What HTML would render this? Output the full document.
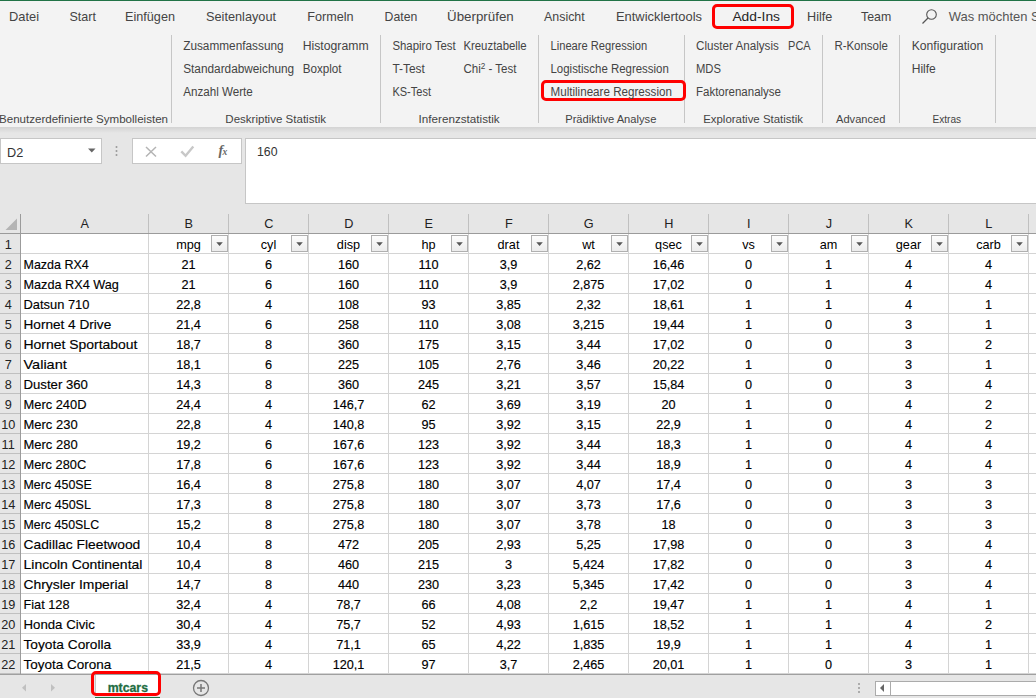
<!DOCTYPE html>
<html><head><meta charset="utf-8"><style>
html,body{margin:0;padding:0;}
body{width:1036px;height:698px;position:relative;overflow:hidden;background:#e6e6e6;font-family:"Liberation Sans", sans-serif;}
div{box-sizing:border-box;}
svg{position:absolute;left:0;top:0;}
svg text{font-family:"Liberation Sans", sans-serif;}
</style></head><body>
<div style="position:absolute;left:0;top:0;width:1036px;height:1px;background:#217346"></div>
<div style="position:absolute;left:0;top:1px;width:1036px;height:126px;background:#f3f3f3"></div>
<div style="position:absolute;left:0;top:127px;width:1036px;height:6px;background:linear-gradient(#d3d3d3,#e6e6e6)"></div>
<div style="position:absolute;left:171px;top:35px;width:1px;height:88px;background:#c6c6c6"></div><div style="position:absolute;left:380px;top:35px;width:1px;height:88px;background:#c6c6c6"></div><div style="position:absolute;left:538px;top:35px;width:1px;height:88px;background:#c6c6c6"></div><div style="position:absolute;left:684px;top:35px;width:1px;height:88px;background:#c6c6c6"></div><div style="position:absolute;left:822px;top:35px;width:1px;height:88px;background:#c6c6c6"></div><div style="position:absolute;left:899px;top:35px;width:1px;height:88px;background:#c6c6c6"></div><div style="position:absolute;left:995px;top:35px;width:1px;height:88px;background:#c6c6c6"></div>
<!-- red highlight boxes -->
<div style="position:absolute;left:712px;top:4px;width:82px;height:25px;border:3px solid #f00;border-radius:5px"></div>
<div style="position:absolute;left:541px;top:80px;width:145px;height:21px;border:3px solid #f00;border-radius:5px"></div>
<!-- formula bar -->
<div style="position:absolute;left:0px;top:138px;width:102px;height:26px;background:#fff;border:1px solid #c6c6c6"></div>
<div style="position:absolute;left:132px;top:138px;width:110px;height:26px;background:#fff;border:1px solid #c6c6c6"></div>
<div style="position:absolute;left:245px;top:138px;width:800px;height:66px;background:#fff;border:1px solid #c6c6c6"></div>
<div style="position:absolute;left:0;top:214px;width:1036px;height:19px;background:#e6e6e6"></div><div style="position:absolute;left:0;top:233px;width:20px;height:441px;background:#e6e6e6"></div><div style="position:absolute;left:21px;top:234px;width:1015px;height:440px;background:#fff"></div><div style="position:absolute;left:148px;top:234px;width:1px;height:440px;background:#d4d4d4"></div><div style="position:absolute;left:148px;top:214px;width:1px;height:19px;background:#c0c0c0"></div><div style="position:absolute;left:228px;top:234px;width:1px;height:440px;background:#d4d4d4"></div><div style="position:absolute;left:228px;top:214px;width:1px;height:19px;background:#c0c0c0"></div><div style="position:absolute;left:308px;top:234px;width:1px;height:440px;background:#d4d4d4"></div><div style="position:absolute;left:308px;top:214px;width:1px;height:19px;background:#c0c0c0"></div><div style="position:absolute;left:388px;top:234px;width:1px;height:440px;background:#d4d4d4"></div><div style="position:absolute;left:388px;top:214px;width:1px;height:19px;background:#c0c0c0"></div><div style="position:absolute;left:468px;top:234px;width:1px;height:440px;background:#d4d4d4"></div><div style="position:absolute;left:468px;top:214px;width:1px;height:19px;background:#c0c0c0"></div><div style="position:absolute;left:548px;top:234px;width:1px;height:440px;background:#d4d4d4"></div><div style="position:absolute;left:548px;top:214px;width:1px;height:19px;background:#c0c0c0"></div><div style="position:absolute;left:628px;top:234px;width:1px;height:440px;background:#d4d4d4"></div><div style="position:absolute;left:628px;top:214px;width:1px;height:19px;background:#c0c0c0"></div><div style="position:absolute;left:708px;top:234px;width:1px;height:440px;background:#d4d4d4"></div><div style="position:absolute;left:708px;top:214px;width:1px;height:19px;background:#c0c0c0"></div><div style="position:absolute;left:788px;top:234px;width:1px;height:440px;background:#d4d4d4"></div><div style="position:absolute;left:788px;top:214px;width:1px;height:19px;background:#c0c0c0"></div><div style="position:absolute;left:868px;top:234px;width:1px;height:440px;background:#d4d4d4"></div><div style="position:absolute;left:868px;top:214px;width:1px;height:19px;background:#c0c0c0"></div><div style="position:absolute;left:948px;top:234px;width:1px;height:440px;background:#d4d4d4"></div><div style="position:absolute;left:948px;top:214px;width:1px;height:19px;background:#c0c0c0"></div><div style="position:absolute;left:1028px;top:234px;width:1px;height:440px;background:#d4d4d4"></div><div style="position:absolute;left:1028px;top:214px;width:1px;height:19px;background:#c0c0c0"></div><div style="position:absolute;left:21px;top:253px;width:1015px;height:1px;background:#d4d4d4"></div><div style="position:absolute;left:0;top:253px;width:20px;height:1px;background:#c0c0c0"></div><div style="position:absolute;left:21px;top:273px;width:1015px;height:1px;background:#d4d4d4"></div><div style="position:absolute;left:0;top:273px;width:20px;height:1px;background:#c0c0c0"></div><div style="position:absolute;left:21px;top:293px;width:1015px;height:1px;background:#d4d4d4"></div><div style="position:absolute;left:0;top:293px;width:20px;height:1px;background:#c0c0c0"></div><div style="position:absolute;left:21px;top:313px;width:1015px;height:1px;background:#d4d4d4"></div><div style="position:absolute;left:0;top:313px;width:20px;height:1px;background:#c0c0c0"></div><div style="position:absolute;left:21px;top:333px;width:1015px;height:1px;background:#d4d4d4"></div><div style="position:absolute;left:0;top:333px;width:20px;height:1px;background:#c0c0c0"></div><div style="position:absolute;left:21px;top:353px;width:1015px;height:1px;background:#d4d4d4"></div><div style="position:absolute;left:0;top:353px;width:20px;height:1px;background:#c0c0c0"></div><div style="position:absolute;left:21px;top:373px;width:1015px;height:1px;background:#d4d4d4"></div><div style="position:absolute;left:0;top:373px;width:20px;height:1px;background:#c0c0c0"></div><div style="position:absolute;left:21px;top:393px;width:1015px;height:1px;background:#d4d4d4"></div><div style="position:absolute;left:0;top:393px;width:20px;height:1px;background:#c0c0c0"></div><div style="position:absolute;left:21px;top:413px;width:1015px;height:1px;background:#d4d4d4"></div><div style="position:absolute;left:0;top:413px;width:20px;height:1px;background:#c0c0c0"></div><div style="position:absolute;left:21px;top:433px;width:1015px;height:1px;background:#d4d4d4"></div><div style="position:absolute;left:0;top:433px;width:20px;height:1px;background:#c0c0c0"></div><div style="position:absolute;left:21px;top:453px;width:1015px;height:1px;background:#d4d4d4"></div><div style="position:absolute;left:0;top:453px;width:20px;height:1px;background:#c0c0c0"></div><div style="position:absolute;left:21px;top:473px;width:1015px;height:1px;background:#d4d4d4"></div><div style="position:absolute;left:0;top:473px;width:20px;height:1px;background:#c0c0c0"></div><div style="position:absolute;left:21px;top:493px;width:1015px;height:1px;background:#d4d4d4"></div><div style="position:absolute;left:0;top:493px;width:20px;height:1px;background:#c0c0c0"></div><div style="position:absolute;left:21px;top:513px;width:1015px;height:1px;background:#d4d4d4"></div><div style="position:absolute;left:0;top:513px;width:20px;height:1px;background:#c0c0c0"></div><div style="position:absolute;left:21px;top:533px;width:1015px;height:1px;background:#d4d4d4"></div><div style="position:absolute;left:0;top:533px;width:20px;height:1px;background:#c0c0c0"></div><div style="position:absolute;left:21px;top:553px;width:1015px;height:1px;background:#d4d4d4"></div><div style="position:absolute;left:0;top:553px;width:20px;height:1px;background:#c0c0c0"></div><div style="position:absolute;left:21px;top:573px;width:1015px;height:1px;background:#d4d4d4"></div><div style="position:absolute;left:0;top:573px;width:20px;height:1px;background:#c0c0c0"></div><div style="position:absolute;left:21px;top:593px;width:1015px;height:1px;background:#d4d4d4"></div><div style="position:absolute;left:0;top:593px;width:20px;height:1px;background:#c0c0c0"></div><div style="position:absolute;left:21px;top:613px;width:1015px;height:1px;background:#d4d4d4"></div><div style="position:absolute;left:0;top:613px;width:20px;height:1px;background:#c0c0c0"></div><div style="position:absolute;left:21px;top:633px;width:1015px;height:1px;background:#d4d4d4"></div><div style="position:absolute;left:0;top:633px;width:20px;height:1px;background:#c0c0c0"></div><div style="position:absolute;left:21px;top:653px;width:1015px;height:1px;background:#d4d4d4"></div><div style="position:absolute;left:0;top:653px;width:20px;height:1px;background:#c0c0c0"></div><div style="position:absolute;left:21px;top:673px;width:1015px;height:1px;background:#d4d4d4"></div><div style="position:absolute;left:0;top:673px;width:20px;height:1px;background:#c0c0c0"></div><div style="position:absolute;left:0;top:233px;width:1036px;height:1px;background:#9b9b9b"></div><div style="position:absolute;left:20px;top:214px;width:1px;height:460px;background:#9b9b9b"></div><div style="position:absolute;left:211px;top:235px;width:17px;height:17px;border:1px solid #b0b0b0;background:linear-gradient(#fdfdfd,#ececec)"></div><div style="position:absolute;left:291px;top:235px;width:17px;height:17px;border:1px solid #b0b0b0;background:linear-gradient(#fdfdfd,#ececec)"></div><div style="position:absolute;left:371px;top:235px;width:17px;height:17px;border:1px solid #b0b0b0;background:linear-gradient(#fdfdfd,#ececec)"></div><div style="position:absolute;left:451px;top:235px;width:17px;height:17px;border:1px solid #b0b0b0;background:linear-gradient(#fdfdfd,#ececec)"></div><div style="position:absolute;left:531px;top:235px;width:17px;height:17px;border:1px solid #b0b0b0;background:linear-gradient(#fdfdfd,#ececec)"></div><div style="position:absolute;left:611px;top:235px;width:17px;height:17px;border:1px solid #b0b0b0;background:linear-gradient(#fdfdfd,#ececec)"></div><div style="position:absolute;left:691px;top:235px;width:17px;height:17px;border:1px solid #b0b0b0;background:linear-gradient(#fdfdfd,#ececec)"></div><div style="position:absolute;left:771px;top:235px;width:17px;height:17px;border:1px solid #b0b0b0;background:linear-gradient(#fdfdfd,#ececec)"></div><div style="position:absolute;left:851px;top:235px;width:17px;height:17px;border:1px solid #b0b0b0;background:linear-gradient(#fdfdfd,#ececec)"></div><div style="position:absolute;left:931px;top:235px;width:17px;height:17px;border:1px solid #b0b0b0;background:linear-gradient(#fdfdfd,#ececec)"></div><div style="position:absolute;left:1011px;top:235px;width:17px;height:17px;border:1px solid #b0b0b0;background:linear-gradient(#fdfdfd,#ececec)"></div>
<!-- sheet tab bar -->
<div style="position:absolute;left:0;top:675px;width:1036px;height:23px;background:#e6e6e6"></div>
<div style="position:absolute;left:0;top:674px;width:1036px;height:1px;background:#a0a0a0"></div>
<div style="position:absolute;left:95px;top:675px;width:65px;height:21px;background:#fff;border-left:1px solid #c6c6c6"></div>
<div style="position:absolute;left:95px;top:696.5px;width:65px;height:1.5px;background:#217346"></div>
<div style="position:absolute;left:91px;top:671px;width:70px;height:25px;border:3px solid #f00;border-radius:5px"></div>
<div style="position:absolute;left:875px;top:681px;width:170px;height:15px;background:#fff;border:1px solid #ababab"></div>
<div style="position:absolute;left:890px;top:681px;width:1px;height:15px;background:#ababab"></div>
<svg width="1036" height="698" viewBox="0 0 1036 698">
<text x="9.0" y="21.0" font-size="12.8" fill="#444" font-weight="normal" textLength="30.0" lengthAdjust="spacingAndGlyphs" >Datei</text><text x="69.5" y="21.0" font-size="12.8" fill="#444" font-weight="normal" textLength="26.5" lengthAdjust="spacingAndGlyphs" >Start</text><text x="125.0" y="21.0" font-size="12.8" fill="#444" font-weight="normal" textLength="50.0" lengthAdjust="spacingAndGlyphs" >Einfügen</text><text x="206.0" y="21.0" font-size="12.8" fill="#444" font-weight="normal" textLength="70.0" lengthAdjust="spacingAndGlyphs" >Seitenlayout</text><text x="307.2" y="21.0" font-size="12.8" fill="#444" font-weight="normal" textLength="46.4" lengthAdjust="spacingAndGlyphs" >Formeln</text><text x="384.6" y="21.0" font-size="12.8" fill="#444" font-weight="normal" textLength="32.7" lengthAdjust="spacingAndGlyphs" >Daten</text><text x="447.1" y="21.0" font-size="12.8" fill="#444" font-weight="normal" textLength="66.6" lengthAdjust="spacingAndGlyphs" >Überprüfen</text><text x="544.1" y="21.0" font-size="12.8" fill="#444" font-weight="normal" textLength="40.6" lengthAdjust="spacingAndGlyphs" >Ansicht</text><text x="616.0" y="21.0" font-size="12.8" fill="#444" font-weight="normal" textLength="86.0" lengthAdjust="spacingAndGlyphs" >Entwicklertools</text><text x="732.4" y="21.0" font-size="12.8" fill="#262626" font-weight="normal" textLength="47.6" lengthAdjust="spacingAndGlyphs" >Add-Ins</text><text x="807.0" y="21.0" font-size="12.8" fill="#444" font-weight="normal" textLength="25.3" lengthAdjust="spacingAndGlyphs" >Hilfe</text><text x="861.0" y="21.0" font-size="12.8" fill="#444" font-weight="normal" textLength="30.2" lengthAdjust="spacingAndGlyphs" >Team</text><text x="948.7" y="21" font-size="12.8" fill="#555" textLength="91" lengthAdjust="spacingAndGlyphs">Was möchten S</text><text x="183.2" y="50.0" font-size="12" fill="#444" font-weight="normal" textLength="100.4" lengthAdjust="spacingAndGlyphs" >Zusammenfassung</text><text x="302.7" y="50.0" font-size="12" fill="#444" font-weight="normal" textLength="65.9" lengthAdjust="spacingAndGlyphs" >Histogramm</text><text x="183.2" y="73.0" font-size="12" fill="#444" font-weight="normal" textLength="111.0" lengthAdjust="spacingAndGlyphs" >Standardabweichung</text><text x="302.7" y="73.0" font-size="12" fill="#444" font-weight="normal" textLength="38.9" lengthAdjust="spacingAndGlyphs" >Boxplot</text><text x="183.2" y="96.0" font-size="12" fill="#444" font-weight="normal" textLength="69.6" lengthAdjust="spacingAndGlyphs" >Anzahl Werte</text><text x="392.4" y="50.0" font-size="12" fill="#444" font-weight="normal" textLength="63.3" lengthAdjust="spacingAndGlyphs" >Shapiro Test</text><text x="463.4" y="50.0" font-size="12" fill="#444" font-weight="normal" textLength="63.3" lengthAdjust="spacingAndGlyphs" >Kreuztabelle</text><text x="392.4" y="73.0" font-size="12" fill="#444" font-weight="normal" textLength="32.4" lengthAdjust="spacingAndGlyphs" >T-Test</text><text x="463.4" y="73" font-size="12" fill="#444" textLength="53.10000000000002" lengthAdjust="spacingAndGlyphs">Chi<tspan font-size="8.5" dy="-4.2">2</tspan><tspan dy="4.2"> - Test</tspan></text><text x="392.4" y="96.0" font-size="12" fill="#444" font-weight="normal" textLength="38.6" lengthAdjust="spacingAndGlyphs" >KS-Test</text><text x="550.5" y="50.0" font-size="12" fill="#444" font-weight="normal" textLength="96.7" lengthAdjust="spacingAndGlyphs" >Lineare Regression</text><text x="550.5" y="73.0" font-size="12" fill="#444" font-weight="normal" textLength="118.3" lengthAdjust="spacingAndGlyphs" >Logistische Regression</text><text x="550.5" y="96.0" font-size="12" fill="#444" font-weight="normal" textLength="121.4" lengthAdjust="spacingAndGlyphs" >Multilineare Regression</text><text x="696.0" y="50.0" font-size="12" fill="#444" font-weight="normal" textLength="82.8" lengthAdjust="spacingAndGlyphs" >Cluster Analysis</text><text x="788.1" y="50.0" font-size="12" fill="#444" font-weight="normal" textLength="22.6" lengthAdjust="spacingAndGlyphs" >PCA</text><text x="696.0" y="73.0" font-size="12" fill="#444" font-weight="normal" textLength="25.0" lengthAdjust="spacingAndGlyphs" >MDS</text><text x="696.0" y="96.0" font-size="12" fill="#444" font-weight="normal" textLength="85.0" lengthAdjust="spacingAndGlyphs" >Faktorenanalyse</text><text x="834.4" y="50.0" font-size="12" fill="#444" font-weight="normal" textLength="53.5" lengthAdjust="spacingAndGlyphs" >R-Konsole</text><text x="911.7" y="50.0" font-size="12" fill="#444" font-weight="normal" textLength="71.6" lengthAdjust="spacingAndGlyphs" >Konfiguration</text><text x="911.7" y="73.0" font-size="12" fill="#444" font-weight="normal" textLength="24.1" lengthAdjust="spacingAndGlyphs" >Hilfe</text><text x="-1.0" y="123.0" font-size="11.6" fill="#444" font-weight="normal" textLength="169.0" lengthAdjust="spacingAndGlyphs" >Benutzerdefinierte Symbolleisten</text><text x="225.3" y="123.0" font-size="11.6" fill="#444" font-weight="normal" textLength="100.7" lengthAdjust="spacingAndGlyphs" >Deskriptive Statistik</text><text x="418.6" y="123.0" font-size="11.6" fill="#444" font-weight="normal" textLength="81.1" lengthAdjust="spacingAndGlyphs" >Inferenzstatistik</text><text x="565.2" y="123.0" font-size="11.6" fill="#444" font-weight="normal" textLength="91.2" lengthAdjust="spacingAndGlyphs" >Prädiktive Analyse</text><text x="703.2" y="123.0" font-size="11.6" fill="#444" font-weight="normal" textLength="99.7" lengthAdjust="spacingAndGlyphs" >Explorative Statistik</text><text x="836.0" y="123.0" font-size="11.6" fill="#444" font-weight="normal" textLength="49.4" lengthAdjust="spacingAndGlyphs" >Advanced</text><text x="932.4" y="123.0" font-size="11.6" fill="#444" font-weight="normal" textLength="28.7" lengthAdjust="spacingAndGlyphs" >Extras</text><polygon points="5.5,230 17,230 17,218.5" fill="#b4b4b4"/><text x="84.8" y="227.8" font-size="12.7" fill="#222" text-anchor="middle">A</text><text x="188.8" y="227.8" font-size="12.7" fill="#222" text-anchor="middle">B</text><text x="268.8" y="227.8" font-size="12.7" fill="#222" text-anchor="middle">C</text><text x="348.8" y="227.8" font-size="12.7" fill="#222" text-anchor="middle">D</text><text x="428.8" y="227.8" font-size="12.7" fill="#222" text-anchor="middle">E</text><text x="508.8" y="227.8" font-size="12.7" fill="#222" text-anchor="middle">F</text><text x="588.8" y="227.8" font-size="12.7" fill="#222" text-anchor="middle">G</text><text x="668.8" y="227.8" font-size="12.7" fill="#222" text-anchor="middle">H</text><text x="748.8" y="227.8" font-size="12.7" fill="#222" text-anchor="middle">I</text><text x="828.8" y="227.8" font-size="12.7" fill="#222" text-anchor="middle">J</text><text x="908.8" y="227.8" font-size="12.7" fill="#222" text-anchor="middle">K</text><text x="988.8" y="227.8" font-size="12.7" fill="#222" text-anchor="middle">L</text><text x="8.2" y="249" font-size="12.7" fill="#222" text-anchor="middle">1</text><text x="8.2" y="269" font-size="12.7" fill="#222" text-anchor="middle">2</text><text x="8.2" y="289" font-size="12.7" fill="#222" text-anchor="middle">3</text><text x="8.2" y="309" font-size="12.7" fill="#222" text-anchor="middle">4</text><text x="8.2" y="329" font-size="12.7" fill="#222" text-anchor="middle">5</text><text x="8.2" y="349" font-size="12.7" fill="#222" text-anchor="middle">6</text><text x="8.2" y="369" font-size="12.7" fill="#222" text-anchor="middle">7</text><text x="8.2" y="389" font-size="12.7" fill="#222" text-anchor="middle">8</text><text x="8.2" y="409" font-size="12.7" fill="#222" text-anchor="middle">9</text><text x="8.2" y="429" font-size="12.7" fill="#222" text-anchor="middle">10</text><text x="8.2" y="449" font-size="12.7" fill="#222" text-anchor="middle">11</text><text x="8.2" y="469" font-size="12.7" fill="#222" text-anchor="middle">12</text><text x="8.2" y="489" font-size="12.7" fill="#222" text-anchor="middle">13</text><text x="8.2" y="509" font-size="12.7" fill="#222" text-anchor="middle">14</text><text x="8.2" y="529" font-size="12.7" fill="#222" text-anchor="middle">15</text><text x="8.2" y="549" font-size="12.7" fill="#222" text-anchor="middle">16</text><text x="8.2" y="569" font-size="12.7" fill="#222" text-anchor="middle">17</text><text x="8.2" y="589" font-size="12.7" fill="#222" text-anchor="middle">18</text><text x="8.2" y="609" font-size="12.7" fill="#222" text-anchor="middle">19</text><text x="8.2" y="629" font-size="12.7" fill="#222" text-anchor="middle">20</text><text x="8.2" y="649" font-size="12.7" fill="#222" text-anchor="middle">21</text><text x="8.2" y="669" font-size="12.7" fill="#222" text-anchor="middle">22</text><text x="188.5" y="249" font-size="12.7" fill="#000" text-anchor="middle">mpg</text><polygon points="216.3,242.3 222.8,242.3 219.55,246" fill="#555"/><text x="268.5" y="249" font-size="12.7" fill="#000" text-anchor="middle">cyl</text><polygon points="296.3,242.3 302.8,242.3 299.55,246" fill="#555"/><text x="348.5" y="249" font-size="12.7" fill="#000" text-anchor="middle">disp</text><polygon points="376.3,242.3 382.8,242.3 379.55,246" fill="#555"/><text x="428.5" y="249" font-size="12.7" fill="#000" text-anchor="middle">hp</text><polygon points="456.3,242.3 462.8,242.3 459.55,246" fill="#555"/><text x="508.5" y="249" font-size="12.7" fill="#000" text-anchor="middle">drat</text><polygon points="536.3,242.3 542.8,242.3 539.55,246" fill="#555"/><text x="588.5" y="249" font-size="12.7" fill="#000" text-anchor="middle">wt</text><polygon points="616.3,242.3 622.8,242.3 619.55,246" fill="#555"/><text x="668.5" y="249" font-size="12.7" fill="#000" text-anchor="middle">qsec</text><polygon points="696.3,242.3 702.8,242.3 699.55,246" fill="#555"/><text x="748.5" y="249" font-size="12.7" fill="#000" text-anchor="middle">vs</text><polygon points="776.3,242.3 782.8,242.3 779.55,246" fill="#555"/><text x="828.5" y="249" font-size="12.7" fill="#000" text-anchor="middle">am</text><polygon points="856.3,242.3 862.8,242.3 859.55,246" fill="#555"/><text x="908.5" y="249" font-size="12.7" fill="#000" text-anchor="middle">gear</text><polygon points="936.3,242.3 942.8,242.3 939.55,246" fill="#555"/><text x="988.5" y="249" font-size="12.7" fill="#000" text-anchor="middle">carb</text><polygon points="1016.3,242.3 1022.8,242.3 1019.55,246" fill="#555"/><text x="23.5" y="269" font-size="12.7" fill="#000" stroke="#000" stroke-width="0.15" textLength="65.2" lengthAdjust="spacingAndGlyphs">Mazda RX4</text><text x="188.5" y="269" font-size="12.7" fill="#000" text-anchor="middle" stroke="#000" stroke-width="0.15">21</text><text x="268.5" y="269" font-size="12.7" fill="#000" text-anchor="middle" stroke="#000" stroke-width="0.15">6</text><text x="348.5" y="269" font-size="12.7" fill="#000" text-anchor="middle" stroke="#000" stroke-width="0.15">160</text><text x="428.5" y="269" font-size="12.7" fill="#000" text-anchor="middle" stroke="#000" stroke-width="0.15">110</text><text x="508.5" y="269" font-size="12.7" fill="#000" text-anchor="middle" stroke="#000" stroke-width="0.15">3,9</text><text x="588.5" y="269" font-size="12.7" fill="#000" text-anchor="middle" stroke="#000" stroke-width="0.15">2,62</text><text x="668.5" y="269" font-size="12.7" fill="#000" text-anchor="middle" stroke="#000" stroke-width="0.15">16,46</text><text x="748.5" y="269" font-size="12.7" fill="#000" text-anchor="middle" stroke="#000" stroke-width="0.15">0</text><text x="828.5" y="269" font-size="12.7" fill="#000" text-anchor="middle" stroke="#000" stroke-width="0.15">1</text><text x="908.5" y="269" font-size="12.7" fill="#000" text-anchor="middle" stroke="#000" stroke-width="0.15">4</text><text x="988.5" y="269" font-size="12.7" fill="#000" text-anchor="middle" stroke="#000" stroke-width="0.15">4</text><text x="23.5" y="289" font-size="12.7" fill="#000" stroke="#000" stroke-width="0.15" textLength="95.3" lengthAdjust="spacingAndGlyphs">Mazda RX4 Wag</text><text x="188.5" y="289" font-size="12.7" fill="#000" text-anchor="middle" stroke="#000" stroke-width="0.15">21</text><text x="268.5" y="289" font-size="12.7" fill="#000" text-anchor="middle" stroke="#000" stroke-width="0.15">6</text><text x="348.5" y="289" font-size="12.7" fill="#000" text-anchor="middle" stroke="#000" stroke-width="0.15">160</text><text x="428.5" y="289" font-size="12.7" fill="#000" text-anchor="middle" stroke="#000" stroke-width="0.15">110</text><text x="508.5" y="289" font-size="12.7" fill="#000" text-anchor="middle" stroke="#000" stroke-width="0.15">3,9</text><text x="588.5" y="289" font-size="12.7" fill="#000" text-anchor="middle" stroke="#000" stroke-width="0.15">2,875</text><text x="668.5" y="289" font-size="12.7" fill="#000" text-anchor="middle" stroke="#000" stroke-width="0.15">17,02</text><text x="748.5" y="289" font-size="12.7" fill="#000" text-anchor="middle" stroke="#000" stroke-width="0.15">0</text><text x="828.5" y="289" font-size="12.7" fill="#000" text-anchor="middle" stroke="#000" stroke-width="0.15">1</text><text x="908.5" y="289" font-size="12.7" fill="#000" text-anchor="middle" stroke="#000" stroke-width="0.15">4</text><text x="988.5" y="289" font-size="12.7" fill="#000" text-anchor="middle" stroke="#000" stroke-width="0.15">4</text><text x="23.5" y="309" font-size="12.7" fill="#000" stroke="#000" stroke-width="0.15" textLength="65.9" lengthAdjust="spacingAndGlyphs">Datsun 710</text><text x="188.5" y="309" font-size="12.7" fill="#000" text-anchor="middle" stroke="#000" stroke-width="0.15">22,8</text><text x="268.5" y="309" font-size="12.7" fill="#000" text-anchor="middle" stroke="#000" stroke-width="0.15">4</text><text x="348.5" y="309" font-size="12.7" fill="#000" text-anchor="middle" stroke="#000" stroke-width="0.15">108</text><text x="428.5" y="309" font-size="12.7" fill="#000" text-anchor="middle" stroke="#000" stroke-width="0.15">93</text><text x="508.5" y="309" font-size="12.7" fill="#000" text-anchor="middle" stroke="#000" stroke-width="0.15">3,85</text><text x="588.5" y="309" font-size="12.7" fill="#000" text-anchor="middle" stroke="#000" stroke-width="0.15">2,32</text><text x="668.5" y="309" font-size="12.7" fill="#000" text-anchor="middle" stroke="#000" stroke-width="0.15">18,61</text><text x="748.5" y="309" font-size="12.7" fill="#000" text-anchor="middle" stroke="#000" stroke-width="0.15">1</text><text x="828.5" y="309" font-size="12.7" fill="#000" text-anchor="middle" stroke="#000" stroke-width="0.15">1</text><text x="908.5" y="309" font-size="12.7" fill="#000" text-anchor="middle" stroke="#000" stroke-width="0.15">4</text><text x="988.5" y="309" font-size="12.7" fill="#000" text-anchor="middle" stroke="#000" stroke-width="0.15">1</text><text x="23.5" y="329" font-size="12.7" fill="#000" stroke="#000" stroke-width="0.15" textLength="87.7" lengthAdjust="spacingAndGlyphs">Hornet 4 Drive</text><text x="188.5" y="329" font-size="12.7" fill="#000" text-anchor="middle" stroke="#000" stroke-width="0.15">21,4</text><text x="268.5" y="329" font-size="12.7" fill="#000" text-anchor="middle" stroke="#000" stroke-width="0.15">6</text><text x="348.5" y="329" font-size="12.7" fill="#000" text-anchor="middle" stroke="#000" stroke-width="0.15">258</text><text x="428.5" y="329" font-size="12.7" fill="#000" text-anchor="middle" stroke="#000" stroke-width="0.15">110</text><text x="508.5" y="329" font-size="12.7" fill="#000" text-anchor="middle" stroke="#000" stroke-width="0.15">3,08</text><text x="588.5" y="329" font-size="12.7" fill="#000" text-anchor="middle" stroke="#000" stroke-width="0.15">3,215</text><text x="668.5" y="329" font-size="12.7" fill="#000" text-anchor="middle" stroke="#000" stroke-width="0.15">19,44</text><text x="748.5" y="329" font-size="12.7" fill="#000" text-anchor="middle" stroke="#000" stroke-width="0.15">1</text><text x="828.5" y="329" font-size="12.7" fill="#000" text-anchor="middle" stroke="#000" stroke-width="0.15">0</text><text x="908.5" y="329" font-size="12.7" fill="#000" text-anchor="middle" stroke="#000" stroke-width="0.15">3</text><text x="988.5" y="329" font-size="12.7" fill="#000" text-anchor="middle" stroke="#000" stroke-width="0.15">1</text><text x="23.5" y="349" font-size="12.7" fill="#000" stroke="#000" stroke-width="0.15" textLength="114" lengthAdjust="spacingAndGlyphs">Hornet Sportabout</text><text x="188.5" y="349" font-size="12.7" fill="#000" text-anchor="middle" stroke="#000" stroke-width="0.15">18,7</text><text x="268.5" y="349" font-size="12.7" fill="#000" text-anchor="middle" stroke="#000" stroke-width="0.15">8</text><text x="348.5" y="349" font-size="12.7" fill="#000" text-anchor="middle" stroke="#000" stroke-width="0.15">360</text><text x="428.5" y="349" font-size="12.7" fill="#000" text-anchor="middle" stroke="#000" stroke-width="0.15">175</text><text x="508.5" y="349" font-size="12.7" fill="#000" text-anchor="middle" stroke="#000" stroke-width="0.15">3,15</text><text x="588.5" y="349" font-size="12.7" fill="#000" text-anchor="middle" stroke="#000" stroke-width="0.15">3,44</text><text x="668.5" y="349" font-size="12.7" fill="#000" text-anchor="middle" stroke="#000" stroke-width="0.15">17,02</text><text x="748.5" y="349" font-size="12.7" fill="#000" text-anchor="middle" stroke="#000" stroke-width="0.15">0</text><text x="828.5" y="349" font-size="12.7" fill="#000" text-anchor="middle" stroke="#000" stroke-width="0.15">0</text><text x="908.5" y="349" font-size="12.7" fill="#000" text-anchor="middle" stroke="#000" stroke-width="0.15">3</text><text x="988.5" y="349" font-size="12.7" fill="#000" text-anchor="middle" stroke="#000" stroke-width="0.15">2</text><text x="23.5" y="369" font-size="12.7" fill="#000" stroke="#000" stroke-width="0.15" textLength="43.3" lengthAdjust="spacingAndGlyphs">Valiant</text><text x="188.5" y="369" font-size="12.7" fill="#000" text-anchor="middle" stroke="#000" stroke-width="0.15">18,1</text><text x="268.5" y="369" font-size="12.7" fill="#000" text-anchor="middle" stroke="#000" stroke-width="0.15">6</text><text x="348.5" y="369" font-size="12.7" fill="#000" text-anchor="middle" stroke="#000" stroke-width="0.15">225</text><text x="428.5" y="369" font-size="12.7" fill="#000" text-anchor="middle" stroke="#000" stroke-width="0.15">105</text><text x="508.5" y="369" font-size="12.7" fill="#000" text-anchor="middle" stroke="#000" stroke-width="0.15">2,76</text><text x="588.5" y="369" font-size="12.7" fill="#000" text-anchor="middle" stroke="#000" stroke-width="0.15">3,46</text><text x="668.5" y="369" font-size="12.7" fill="#000" text-anchor="middle" stroke="#000" stroke-width="0.15">20,22</text><text x="748.5" y="369" font-size="12.7" fill="#000" text-anchor="middle" stroke="#000" stroke-width="0.15">1</text><text x="828.5" y="369" font-size="12.7" fill="#000" text-anchor="middle" stroke="#000" stroke-width="0.15">0</text><text x="908.5" y="369" font-size="12.7" fill="#000" text-anchor="middle" stroke="#000" stroke-width="0.15">3</text><text x="988.5" y="369" font-size="12.7" fill="#000" text-anchor="middle" stroke="#000" stroke-width="0.15">1</text><text x="23.5" y="389" font-size="12.7" fill="#000" stroke="#000" stroke-width="0.15" textLength="64.4" lengthAdjust="spacingAndGlyphs">Duster 360</text><text x="188.5" y="389" font-size="12.7" fill="#000" text-anchor="middle" stroke="#000" stroke-width="0.15">14,3</text><text x="268.5" y="389" font-size="12.7" fill="#000" text-anchor="middle" stroke="#000" stroke-width="0.15">8</text><text x="348.5" y="389" font-size="12.7" fill="#000" text-anchor="middle" stroke="#000" stroke-width="0.15">360</text><text x="428.5" y="389" font-size="12.7" fill="#000" text-anchor="middle" stroke="#000" stroke-width="0.15">245</text><text x="508.5" y="389" font-size="12.7" fill="#000" text-anchor="middle" stroke="#000" stroke-width="0.15">3,21</text><text x="588.5" y="389" font-size="12.7" fill="#000" text-anchor="middle" stroke="#000" stroke-width="0.15">3,57</text><text x="668.5" y="389" font-size="12.7" fill="#000" text-anchor="middle" stroke="#000" stroke-width="0.15">15,84</text><text x="748.5" y="389" font-size="12.7" fill="#000" text-anchor="middle" stroke="#000" stroke-width="0.15">0</text><text x="828.5" y="389" font-size="12.7" fill="#000" text-anchor="middle" stroke="#000" stroke-width="0.15">0</text><text x="908.5" y="389" font-size="12.7" fill="#000" text-anchor="middle" stroke="#000" stroke-width="0.15">3</text><text x="988.5" y="389" font-size="12.7" fill="#000" text-anchor="middle" stroke="#000" stroke-width="0.15">4</text><text x="23.5" y="409" font-size="12.7" fill="#000" stroke="#000" stroke-width="0.15" textLength="63" lengthAdjust="spacingAndGlyphs">Merc 240D</text><text x="188.5" y="409" font-size="12.7" fill="#000" text-anchor="middle" stroke="#000" stroke-width="0.15">24,4</text><text x="268.5" y="409" font-size="12.7" fill="#000" text-anchor="middle" stroke="#000" stroke-width="0.15">4</text><text x="348.5" y="409" font-size="12.7" fill="#000" text-anchor="middle" stroke="#000" stroke-width="0.15">146,7</text><text x="428.5" y="409" font-size="12.7" fill="#000" text-anchor="middle" stroke="#000" stroke-width="0.15">62</text><text x="508.5" y="409" font-size="12.7" fill="#000" text-anchor="middle" stroke="#000" stroke-width="0.15">3,69</text><text x="588.5" y="409" font-size="12.7" fill="#000" text-anchor="middle" stroke="#000" stroke-width="0.15">3,19</text><text x="668.5" y="409" font-size="12.7" fill="#000" text-anchor="middle" stroke="#000" stroke-width="0.15">20</text><text x="748.5" y="409" font-size="12.7" fill="#000" text-anchor="middle" stroke="#000" stroke-width="0.15">1</text><text x="828.5" y="409" font-size="12.7" fill="#000" text-anchor="middle" stroke="#000" stroke-width="0.15">0</text><text x="908.5" y="409" font-size="12.7" fill="#000" text-anchor="middle" stroke="#000" stroke-width="0.15">4</text><text x="988.5" y="409" font-size="12.7" fill="#000" text-anchor="middle" stroke="#000" stroke-width="0.15">2</text><text x="23.5" y="429" font-size="12.7" fill="#000" stroke="#000" stroke-width="0.15" textLength="54.1" lengthAdjust="spacingAndGlyphs">Merc 230</text><text x="188.5" y="429" font-size="12.7" fill="#000" text-anchor="middle" stroke="#000" stroke-width="0.15">22,8</text><text x="268.5" y="429" font-size="12.7" fill="#000" text-anchor="middle" stroke="#000" stroke-width="0.15">4</text><text x="348.5" y="429" font-size="12.7" fill="#000" text-anchor="middle" stroke="#000" stroke-width="0.15">140,8</text><text x="428.5" y="429" font-size="12.7" fill="#000" text-anchor="middle" stroke="#000" stroke-width="0.15">95</text><text x="508.5" y="429" font-size="12.7" fill="#000" text-anchor="middle" stroke="#000" stroke-width="0.15">3,92</text><text x="588.5" y="429" font-size="12.7" fill="#000" text-anchor="middle" stroke="#000" stroke-width="0.15">3,15</text><text x="668.5" y="429" font-size="12.7" fill="#000" text-anchor="middle" stroke="#000" stroke-width="0.15">22,9</text><text x="748.5" y="429" font-size="12.7" fill="#000" text-anchor="middle" stroke="#000" stroke-width="0.15">1</text><text x="828.5" y="429" font-size="12.7" fill="#000" text-anchor="middle" stroke="#000" stroke-width="0.15">0</text><text x="908.5" y="429" font-size="12.7" fill="#000" text-anchor="middle" stroke="#000" stroke-width="0.15">4</text><text x="988.5" y="429" font-size="12.7" fill="#000" text-anchor="middle" stroke="#000" stroke-width="0.15">2</text><text x="23.5" y="449" font-size="12.7" fill="#000" stroke="#000" stroke-width="0.15" textLength="54.1" lengthAdjust="spacingAndGlyphs">Merc 280</text><text x="188.5" y="449" font-size="12.7" fill="#000" text-anchor="middle" stroke="#000" stroke-width="0.15">19,2</text><text x="268.5" y="449" font-size="12.7" fill="#000" text-anchor="middle" stroke="#000" stroke-width="0.15">6</text><text x="348.5" y="449" font-size="12.7" fill="#000" text-anchor="middle" stroke="#000" stroke-width="0.15">167,6</text><text x="428.5" y="449" font-size="12.7" fill="#000" text-anchor="middle" stroke="#000" stroke-width="0.15">123</text><text x="508.5" y="449" font-size="12.7" fill="#000" text-anchor="middle" stroke="#000" stroke-width="0.15">3,92</text><text x="588.5" y="449" font-size="12.7" fill="#000" text-anchor="middle" stroke="#000" stroke-width="0.15">3,44</text><text x="668.5" y="449" font-size="12.7" fill="#000" text-anchor="middle" stroke="#000" stroke-width="0.15">18,3</text><text x="748.5" y="449" font-size="12.7" fill="#000" text-anchor="middle" stroke="#000" stroke-width="0.15">1</text><text x="828.5" y="449" font-size="12.7" fill="#000" text-anchor="middle" stroke="#000" stroke-width="0.15">0</text><text x="908.5" y="449" font-size="12.7" fill="#000" text-anchor="middle" stroke="#000" stroke-width="0.15">4</text><text x="988.5" y="449" font-size="12.7" fill="#000" text-anchor="middle" stroke="#000" stroke-width="0.15">4</text><text x="23.5" y="469" font-size="12.7" fill="#000" stroke="#000" stroke-width="0.15" textLength="62.7" lengthAdjust="spacingAndGlyphs">Merc 280C</text><text x="188.5" y="469" font-size="12.7" fill="#000" text-anchor="middle" stroke="#000" stroke-width="0.15">17,8</text><text x="268.5" y="469" font-size="12.7" fill="#000" text-anchor="middle" stroke="#000" stroke-width="0.15">6</text><text x="348.5" y="469" font-size="12.7" fill="#000" text-anchor="middle" stroke="#000" stroke-width="0.15">167,6</text><text x="428.5" y="469" font-size="12.7" fill="#000" text-anchor="middle" stroke="#000" stroke-width="0.15">123</text><text x="508.5" y="469" font-size="12.7" fill="#000" text-anchor="middle" stroke="#000" stroke-width="0.15">3,92</text><text x="588.5" y="469" font-size="12.7" fill="#000" text-anchor="middle" stroke="#000" stroke-width="0.15">3,44</text><text x="668.5" y="469" font-size="12.7" fill="#000" text-anchor="middle" stroke="#000" stroke-width="0.15">18,9</text><text x="748.5" y="469" font-size="12.7" fill="#000" text-anchor="middle" stroke="#000" stroke-width="0.15">1</text><text x="828.5" y="469" font-size="12.7" fill="#000" text-anchor="middle" stroke="#000" stroke-width="0.15">0</text><text x="908.5" y="469" font-size="12.7" fill="#000" text-anchor="middle" stroke="#000" stroke-width="0.15">4</text><text x="988.5" y="469" font-size="12.7" fill="#000" text-anchor="middle" stroke="#000" stroke-width="0.15">4</text><text x="23.5" y="489" font-size="12.7" fill="#000" stroke="#000" stroke-width="0.15" textLength="68.4" lengthAdjust="spacingAndGlyphs">Merc 450SE</text><text x="188.5" y="489" font-size="12.7" fill="#000" text-anchor="middle" stroke="#000" stroke-width="0.15">16,4</text><text x="268.5" y="489" font-size="12.7" fill="#000" text-anchor="middle" stroke="#000" stroke-width="0.15">8</text><text x="348.5" y="489" font-size="12.7" fill="#000" text-anchor="middle" stroke="#000" stroke-width="0.15">275,8</text><text x="428.5" y="489" font-size="12.7" fill="#000" text-anchor="middle" stroke="#000" stroke-width="0.15">180</text><text x="508.5" y="489" font-size="12.7" fill="#000" text-anchor="middle" stroke="#000" stroke-width="0.15">3,07</text><text x="588.5" y="489" font-size="12.7" fill="#000" text-anchor="middle" stroke="#000" stroke-width="0.15">4,07</text><text x="668.5" y="489" font-size="12.7" fill="#000" text-anchor="middle" stroke="#000" stroke-width="0.15">17,4</text><text x="748.5" y="489" font-size="12.7" fill="#000" text-anchor="middle" stroke="#000" stroke-width="0.15">0</text><text x="828.5" y="489" font-size="12.7" fill="#000" text-anchor="middle" stroke="#000" stroke-width="0.15">0</text><text x="908.5" y="489" font-size="12.7" fill="#000" text-anchor="middle" stroke="#000" stroke-width="0.15">3</text><text x="988.5" y="489" font-size="12.7" fill="#000" text-anchor="middle" stroke="#000" stroke-width="0.15">3</text><text x="23.5" y="509" font-size="12.7" fill="#000" stroke="#000" stroke-width="0.15" textLength="67.4" lengthAdjust="spacingAndGlyphs">Merc 450SL</text><text x="188.5" y="509" font-size="12.7" fill="#000" text-anchor="middle" stroke="#000" stroke-width="0.15">17,3</text><text x="268.5" y="509" font-size="12.7" fill="#000" text-anchor="middle" stroke="#000" stroke-width="0.15">8</text><text x="348.5" y="509" font-size="12.7" fill="#000" text-anchor="middle" stroke="#000" stroke-width="0.15">275,8</text><text x="428.5" y="509" font-size="12.7" fill="#000" text-anchor="middle" stroke="#000" stroke-width="0.15">180</text><text x="508.5" y="509" font-size="12.7" fill="#000" text-anchor="middle" stroke="#000" stroke-width="0.15">3,07</text><text x="588.5" y="509" font-size="12.7" fill="#000" text-anchor="middle" stroke="#000" stroke-width="0.15">3,73</text><text x="668.5" y="509" font-size="12.7" fill="#000" text-anchor="middle" stroke="#000" stroke-width="0.15">17,6</text><text x="748.5" y="509" font-size="12.7" fill="#000" text-anchor="middle" stroke="#000" stroke-width="0.15">0</text><text x="828.5" y="509" font-size="12.7" fill="#000" text-anchor="middle" stroke="#000" stroke-width="0.15">0</text><text x="908.5" y="509" font-size="12.7" fill="#000" text-anchor="middle" stroke="#000" stroke-width="0.15">3</text><text x="988.5" y="509" font-size="12.7" fill="#000" text-anchor="middle" stroke="#000" stroke-width="0.15">3</text><text x="23.5" y="529" font-size="12.7" fill="#000" stroke="#000" stroke-width="0.15" textLength="75.6" lengthAdjust="spacingAndGlyphs">Merc 450SLC</text><text x="188.5" y="529" font-size="12.7" fill="#000" text-anchor="middle" stroke="#000" stroke-width="0.15">15,2</text><text x="268.5" y="529" font-size="12.7" fill="#000" text-anchor="middle" stroke="#000" stroke-width="0.15">8</text><text x="348.5" y="529" font-size="12.7" fill="#000" text-anchor="middle" stroke="#000" stroke-width="0.15">275,8</text><text x="428.5" y="529" font-size="12.7" fill="#000" text-anchor="middle" stroke="#000" stroke-width="0.15">180</text><text x="508.5" y="529" font-size="12.7" fill="#000" text-anchor="middle" stroke="#000" stroke-width="0.15">3,07</text><text x="588.5" y="529" font-size="12.7" fill="#000" text-anchor="middle" stroke="#000" stroke-width="0.15">3,78</text><text x="668.5" y="529" font-size="12.7" fill="#000" text-anchor="middle" stroke="#000" stroke-width="0.15">18</text><text x="748.5" y="529" font-size="12.7" fill="#000" text-anchor="middle" stroke="#000" stroke-width="0.15">0</text><text x="828.5" y="529" font-size="12.7" fill="#000" text-anchor="middle" stroke="#000" stroke-width="0.15">0</text><text x="908.5" y="529" font-size="12.7" fill="#000" text-anchor="middle" stroke="#000" stroke-width="0.15">3</text><text x="988.5" y="529" font-size="12.7" fill="#000" text-anchor="middle" stroke="#000" stroke-width="0.15">3</text><text x="23.5" y="549" font-size="12.7" fill="#000" stroke="#000" stroke-width="0.15" textLength="116.8" lengthAdjust="spacingAndGlyphs">Cadillac Fleetwood</text><text x="188.5" y="549" font-size="12.7" fill="#000" text-anchor="middle" stroke="#000" stroke-width="0.15">10,4</text><text x="268.5" y="549" font-size="12.7" fill="#000" text-anchor="middle" stroke="#000" stroke-width="0.15">8</text><text x="348.5" y="549" font-size="12.7" fill="#000" text-anchor="middle" stroke="#000" stroke-width="0.15">472</text><text x="428.5" y="549" font-size="12.7" fill="#000" text-anchor="middle" stroke="#000" stroke-width="0.15">205</text><text x="508.5" y="549" font-size="12.7" fill="#000" text-anchor="middle" stroke="#000" stroke-width="0.15">2,93</text><text x="588.5" y="549" font-size="12.7" fill="#000" text-anchor="middle" stroke="#000" stroke-width="0.15">5,25</text><text x="668.5" y="549" font-size="12.7" fill="#000" text-anchor="middle" stroke="#000" stroke-width="0.15">17,98</text><text x="748.5" y="549" font-size="12.7" fill="#000" text-anchor="middle" stroke="#000" stroke-width="0.15">0</text><text x="828.5" y="549" font-size="12.7" fill="#000" text-anchor="middle" stroke="#000" stroke-width="0.15">0</text><text x="908.5" y="549" font-size="12.7" fill="#000" text-anchor="middle" stroke="#000" stroke-width="0.15">3</text><text x="988.5" y="549" font-size="12.7" fill="#000" text-anchor="middle" stroke="#000" stroke-width="0.15">4</text><text x="23.5" y="569" font-size="12.7" fill="#000" stroke="#000" stroke-width="0.15" textLength="118.9" lengthAdjust="spacingAndGlyphs">Lincoln Continental</text><text x="188.5" y="569" font-size="12.7" fill="#000" text-anchor="middle" stroke="#000" stroke-width="0.15">10,4</text><text x="268.5" y="569" font-size="12.7" fill="#000" text-anchor="middle" stroke="#000" stroke-width="0.15">8</text><text x="348.5" y="569" font-size="12.7" fill="#000" text-anchor="middle" stroke="#000" stroke-width="0.15">460</text><text x="428.5" y="569" font-size="12.7" fill="#000" text-anchor="middle" stroke="#000" stroke-width="0.15">215</text><text x="508.5" y="569" font-size="12.7" fill="#000" text-anchor="middle" stroke="#000" stroke-width="0.15">3</text><text x="588.5" y="569" font-size="12.7" fill="#000" text-anchor="middle" stroke="#000" stroke-width="0.15">5,424</text><text x="668.5" y="569" font-size="12.7" fill="#000" text-anchor="middle" stroke="#000" stroke-width="0.15">17,82</text><text x="748.5" y="569" font-size="12.7" fill="#000" text-anchor="middle" stroke="#000" stroke-width="0.15">0</text><text x="828.5" y="569" font-size="12.7" fill="#000" text-anchor="middle" stroke="#000" stroke-width="0.15">0</text><text x="908.5" y="569" font-size="12.7" fill="#000" text-anchor="middle" stroke="#000" stroke-width="0.15">3</text><text x="988.5" y="569" font-size="12.7" fill="#000" text-anchor="middle" stroke="#000" stroke-width="0.15">4</text><text x="23.5" y="589" font-size="12.7" fill="#000" stroke="#000" stroke-width="0.15" textLength="104.8" lengthAdjust="spacingAndGlyphs">Chrysler Imperial</text><text x="188.5" y="589" font-size="12.7" fill="#000" text-anchor="middle" stroke="#000" stroke-width="0.15">14,7</text><text x="268.5" y="589" font-size="12.7" fill="#000" text-anchor="middle" stroke="#000" stroke-width="0.15">8</text><text x="348.5" y="589" font-size="12.7" fill="#000" text-anchor="middle" stroke="#000" stroke-width="0.15">440</text><text x="428.5" y="589" font-size="12.7" fill="#000" text-anchor="middle" stroke="#000" stroke-width="0.15">230</text><text x="508.5" y="589" font-size="12.7" fill="#000" text-anchor="middle" stroke="#000" stroke-width="0.15">3,23</text><text x="588.5" y="589" font-size="12.7" fill="#000" text-anchor="middle" stroke="#000" stroke-width="0.15">5,345</text><text x="668.5" y="589" font-size="12.7" fill="#000" text-anchor="middle" stroke="#000" stroke-width="0.15">17,42</text><text x="748.5" y="589" font-size="12.7" fill="#000" text-anchor="middle" stroke="#000" stroke-width="0.15">0</text><text x="828.5" y="589" font-size="12.7" fill="#000" text-anchor="middle" stroke="#000" stroke-width="0.15">0</text><text x="908.5" y="589" font-size="12.7" fill="#000" text-anchor="middle" stroke="#000" stroke-width="0.15">3</text><text x="988.5" y="589" font-size="12.7" fill="#000" text-anchor="middle" stroke="#000" stroke-width="0.15">4</text><text x="23.5" y="609" font-size="12.7" fill="#000" stroke="#000" stroke-width="0.15" textLength="46" lengthAdjust="spacingAndGlyphs">Fiat 128</text><text x="188.5" y="609" font-size="12.7" fill="#000" text-anchor="middle" stroke="#000" stroke-width="0.15">32,4</text><text x="268.5" y="609" font-size="12.7" fill="#000" text-anchor="middle" stroke="#000" stroke-width="0.15">4</text><text x="348.5" y="609" font-size="12.7" fill="#000" text-anchor="middle" stroke="#000" stroke-width="0.15">78,7</text><text x="428.5" y="609" font-size="12.7" fill="#000" text-anchor="middle" stroke="#000" stroke-width="0.15">66</text><text x="508.5" y="609" font-size="12.7" fill="#000" text-anchor="middle" stroke="#000" stroke-width="0.15">4,08</text><text x="588.5" y="609" font-size="12.7" fill="#000" text-anchor="middle" stroke="#000" stroke-width="0.15">2,2</text><text x="668.5" y="609" font-size="12.7" fill="#000" text-anchor="middle" stroke="#000" stroke-width="0.15">19,47</text><text x="748.5" y="609" font-size="12.7" fill="#000" text-anchor="middle" stroke="#000" stroke-width="0.15">1</text><text x="828.5" y="609" font-size="12.7" fill="#000" text-anchor="middle" stroke="#000" stroke-width="0.15">1</text><text x="908.5" y="609" font-size="12.7" fill="#000" text-anchor="middle" stroke="#000" stroke-width="0.15">4</text><text x="988.5" y="609" font-size="12.7" fill="#000" text-anchor="middle" stroke="#000" stroke-width="0.15">1</text><text x="23.5" y="629" font-size="12.7" fill="#000" stroke="#000" stroke-width="0.15" textLength="71.3" lengthAdjust="spacingAndGlyphs">Honda Civic</text><text x="188.5" y="629" font-size="12.7" fill="#000" text-anchor="middle" stroke="#000" stroke-width="0.15">30,4</text><text x="268.5" y="629" font-size="12.7" fill="#000" text-anchor="middle" stroke="#000" stroke-width="0.15">4</text><text x="348.5" y="629" font-size="12.7" fill="#000" text-anchor="middle" stroke="#000" stroke-width="0.15">75,7</text><text x="428.5" y="629" font-size="12.7" fill="#000" text-anchor="middle" stroke="#000" stroke-width="0.15">52</text><text x="508.5" y="629" font-size="12.7" fill="#000" text-anchor="middle" stroke="#000" stroke-width="0.15">4,93</text><text x="588.5" y="629" font-size="12.7" fill="#000" text-anchor="middle" stroke="#000" stroke-width="0.15">1,615</text><text x="668.5" y="629" font-size="12.7" fill="#000" text-anchor="middle" stroke="#000" stroke-width="0.15">18,52</text><text x="748.5" y="629" font-size="12.7" fill="#000" text-anchor="middle" stroke="#000" stroke-width="0.15">1</text><text x="828.5" y="629" font-size="12.7" fill="#000" text-anchor="middle" stroke="#000" stroke-width="0.15">1</text><text x="908.5" y="629" font-size="12.7" fill="#000" text-anchor="middle" stroke="#000" stroke-width="0.15">4</text><text x="988.5" y="629" font-size="12.7" fill="#000" text-anchor="middle" stroke="#000" stroke-width="0.15">2</text><text x="23.5" y="649" font-size="12.7" fill="#000" stroke="#000" stroke-width="0.15" textLength="87.7" lengthAdjust="spacingAndGlyphs">Toyota Corolla</text><text x="188.5" y="649" font-size="12.7" fill="#000" text-anchor="middle" stroke="#000" stroke-width="0.15">33,9</text><text x="268.5" y="649" font-size="12.7" fill="#000" text-anchor="middle" stroke="#000" stroke-width="0.15">4</text><text x="348.5" y="649" font-size="12.7" fill="#000" text-anchor="middle" stroke="#000" stroke-width="0.15">71,1</text><text x="428.5" y="649" font-size="12.7" fill="#000" text-anchor="middle" stroke="#000" stroke-width="0.15">65</text><text x="508.5" y="649" font-size="12.7" fill="#000" text-anchor="middle" stroke="#000" stroke-width="0.15">4,22</text><text x="588.5" y="649" font-size="12.7" fill="#000" text-anchor="middle" stroke="#000" stroke-width="0.15">1,835</text><text x="668.5" y="649" font-size="12.7" fill="#000" text-anchor="middle" stroke="#000" stroke-width="0.15">19,9</text><text x="748.5" y="649" font-size="12.7" fill="#000" text-anchor="middle" stroke="#000" stroke-width="0.15">1</text><text x="828.5" y="649" font-size="12.7" fill="#000" text-anchor="middle" stroke="#000" stroke-width="0.15">1</text><text x="908.5" y="649" font-size="12.7" fill="#000" text-anchor="middle" stroke="#000" stroke-width="0.15">4</text><text x="988.5" y="649" font-size="12.7" fill="#000" text-anchor="middle" stroke="#000" stroke-width="0.15">1</text><text x="23.5" y="669" font-size="12.7" fill="#000" stroke="#000" stroke-width="0.15" textLength="87.7" lengthAdjust="spacingAndGlyphs">Toyota Corona</text><text x="188.5" y="669" font-size="12.7" fill="#000" text-anchor="middle" stroke="#000" stroke-width="0.15">21,5</text><text x="268.5" y="669" font-size="12.7" fill="#000" text-anchor="middle" stroke="#000" stroke-width="0.15">4</text><text x="348.5" y="669" font-size="12.7" fill="#000" text-anchor="middle" stroke="#000" stroke-width="0.15">120,1</text><text x="428.5" y="669" font-size="12.7" fill="#000" text-anchor="middle" stroke="#000" stroke-width="0.15">97</text><text x="508.5" y="669" font-size="12.7" fill="#000" text-anchor="middle" stroke="#000" stroke-width="0.15">3,7</text><text x="588.5" y="669" font-size="12.7" fill="#000" text-anchor="middle" stroke="#000" stroke-width="0.15">2,465</text><text x="668.5" y="669" font-size="12.7" fill="#000" text-anchor="middle" stroke="#000" stroke-width="0.15">20,01</text><text x="748.5" y="669" font-size="12.7" fill="#000" text-anchor="middle" stroke="#000" stroke-width="0.15">1</text><text x="828.5" y="669" font-size="12.7" fill="#000" text-anchor="middle" stroke="#000" stroke-width="0.15">0</text><text x="908.5" y="669" font-size="12.7" fill="#000" text-anchor="middle" stroke="#000" stroke-width="0.15">3</text><text x="988.5" y="669" font-size="12.7" fill="#000" text-anchor="middle" stroke="#000" stroke-width="0.15">1</text>
<!-- name box text -->
<text x="7" y="157" font-size="12.7" fill="#333">D2</text>
<polygon points="88,148.5 95.5,148.5 91.75,152.5" fill="#666"/>
<circle cx="116.5" cy="147" r="1" fill="#999"/><circle cx="116.5" cy="151" r="1" fill="#999"/><circle cx="116.5" cy="155" r="1" fill="#999"/>
<path d="M146,147 L156,156.5 M156,147 L146,156.5" stroke="#b4b4b4" stroke-width="1.5" fill="none"/>
<path d="M181.3,151.3 L185.6,155.8 L193.3,146.5" stroke="#c8c8c8" stroke-width="2.4" fill="none"/>
<text x="218.5" y="154.5" font-size="14" style="font-family:'Liberation Serif';font-style:italic;font-weight:bold" fill="#666">f</text>
<text x="222.5" y="155" font-size="9.5" style="font-family:'Liberation Serif';font-style:italic;font-weight:bold" fill="#666">x</text>
<text x="257" y="156" font-size="12.7" fill="#333" textLength="20.5" lengthAdjust="spacingAndGlyphs">160</text>
<!-- search icon -->
<circle cx="931.5" cy="14.5" r="4.8" stroke="#555" stroke-width="1.1" fill="none"/>
<path d="M928,18 L922.5,23.5" stroke="#555" stroke-width="1.2"/>
<!-- sheet tab -->
<text x="107.7" y="692" font-size="13" font-weight="bold" fill="#1f6e43" stroke="#1f6e43" stroke-width="0.3" textLength="40.3" lengthAdjust="spacingAndGlyphs">mtcars</text>
<polygon points="26,684 26,691.5 22,687.75" fill="#c0c0c0"/>
<polygon points="51,684 51,691.5 55,687.75" fill="#c0c0c0"/>
<circle cx="201" cy="688" r="7.5" stroke="#777" stroke-width="1.3" fill="none"/>
<path d="M197,688 H205 M201,684 V692" stroke="#777" stroke-width="1.5"/>
<circle cx="859" cy="684" r="1" fill="#999"/><circle cx="859" cy="688" r="1" fill="#999"/><circle cx="859" cy="692" r="1" fill="#999"/>
<polygon points="884,684 884,692 880,688" fill="#666"/>
</svg>
</body></html>
